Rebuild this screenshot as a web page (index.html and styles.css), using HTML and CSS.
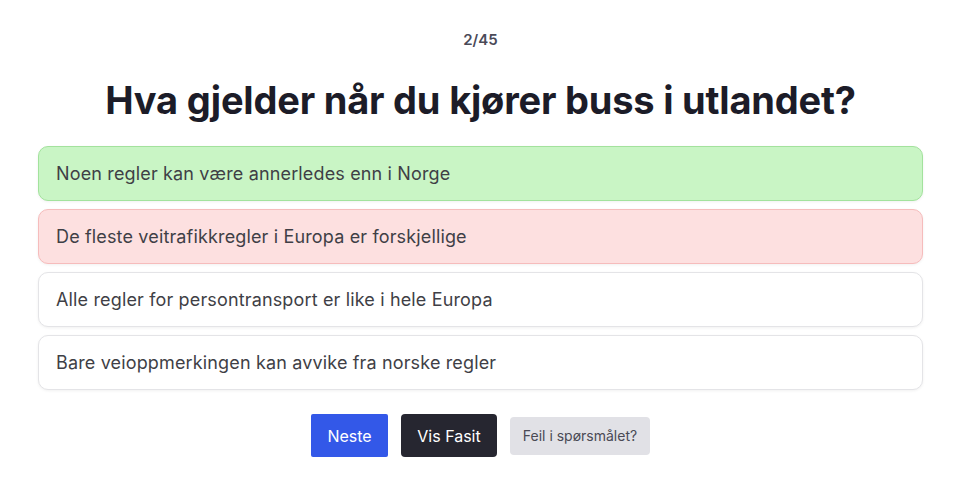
FILE: index.html
```html
<!DOCTYPE html>
<html lang="no">
<head>
  <meta charset="UTF-8">
  <meta name="viewport" content="width=device-width, initial-scale=1.0">
  <title>Quiz</title>
  <link rel="stylesheet" href="styles.css">
</head>
<body>
  <div class="quiz">
    <div class="counter">2/45</div>
    <h1 class="question">Hva gjelder når du kjører buss i utlandet?</h1>
    <div class="answers">
      <div class="answer correct">Noen regler kan være annerledes enn i Norge</div>
      <div class="answer wrong">De fleste veitrafikkregler i Europa er forskjellige</div>
      <div class="answer">Alle regler for persontransport er like i hele Europa</div>
      <div class="answer">Bare veioppmerkingen kan avvike fra norske regler</div>
    </div>
    <div class="actions">
      <button class="btn btn-next">Neste</button>
      <button class="btn btn-fasit">Vis Fasit</button>
      <button class="btn btn-report">Feil i spørsmålet?</button>
    </div>
  </div>
</body>
</html>
```

FILE: styles.css
```css
body {
  font-family: Inter, "Noto Sans", sans-serif;
  background-color: #fff;
  margin: 0;
}

.quiz {
  padding: 30px 47px 0 38px;
}

.counter {
  text-align: center;
  font-size: 15px;
  font-weight: 600;
  color: #4a4a58;
  line-height: 20px;
}

.question {
  text-align: center;
  font-size: 38px;
  font-weight: 700;
  color: #1c1c28;
  margin: 28px 0 24px;
  line-height: 44px;
  letter-spacing: -0.2px;
}

.answers {
  display: flex;
  flex-direction: column;
  gap: 8px;
}

.answer {
  height: 55px;
  box-sizing: border-box;
  display: flex;
  align-items: center;
  padding: 0 17px;
  font-size: 18px;
  letter-spacing: 0.15px;
  color: #3f3f46;
  background-color: #fff;
  border: 1px solid #e4e4e7;
  border-radius: 10px;
  box-shadow: 0 1px 3px rgba(0, 0, 0, 0.06);
}

.answer.correct {
  background-color: #c9f5c5;
  border-color: #a3e29d;
}

.answer.wrong {
  background-color: #fde0e0;
  border-color: #f6bcbc;
}

.actions {
  display: flex;
  justify-content: center;
  align-items: center;
  gap: 13px;
  margin-top: 24px;
}

.btn {
  font-family: Inter, "Noto Sans", sans-serif;
  border: none;
  cursor: pointer;
  font-size: 16px;
  color: #fff;
  height: 43px;
  border-radius: 2px;
}

.btn-next {
  background-color: #3358e8;
  width: 77px;
}

.btn-fasit {
  background-color: #262630;
  width: 96px;
  border-radius: 4px;
}

.btn-report {
  background-color: #e1e1e6;
  color: #4a4a55;
  font-size: 14px;
  height: 38px;
  width: 140px;
  border-radius: 4px;
}
```
